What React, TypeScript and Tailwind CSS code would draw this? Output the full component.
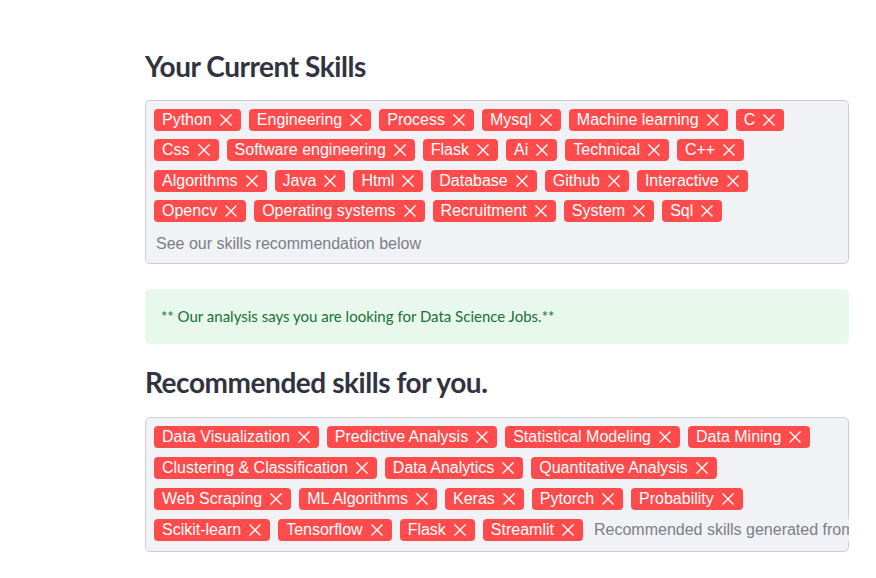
import React from "react";

const XIcon = () => (
  <svg width="12" height="12" viewBox="0 0 12 12" className="shrink-0">
    <path d="M1 1 L11 11 M11 1 L1 11" stroke="white" strokeWidth="1.4" strokeLinecap="square" fill="none" />
  </svg>
);

const Tag = ({ label }: { label: string }) => (
  <span className="flex h-[22px] items-center gap-2 rounded-[4px] bg-[#ff4b4b] pl-2 pr-[9px] text-[16px] leading-none text-white whitespace-nowrap">
    <span>{label}</span>
    <XIcon />
  </span>
);

const font = { fontFamily: "Lato, 'Source Sans Pro', 'Noto Sans', sans-serif" };

const current: string[][] = [
  ["Python", "Engineering", "Process", "Mysql", "Machine learning", "C"],
  ["Css", "Software engineering", "Flask", "Ai", "Technical", "C++"],
  ["Algorithms", "Java", "Html", "Database", "Github", "Interactive"],
  ["Opencv", "Operating systems", "Recruitment", "System", "Sql"],
];

const recommended: string[][] = [
  ["Data Visualization", "Predictive Analysis", "Statistical Modeling", "Data Mining"],
  ["Clustering & Classification", "Data Analytics", "Quantitative Analysis"],
  ["Web Scraping", "ML Algorithms", "Keras", "Pytorch", "Probability"],
];

export default function App() {
  return (
    <div className="min-h-screen w-full overflow-hidden bg-white" style={{ fontFamily: "'Liberation Sans', Arial, sans-serif" }}>
      <div className="ml-[145px] w-[704px] pt-[49px]">
        <h3 className="h-[34px] text-[28px] font-bold leading-[34px] tracking-[-0.45px] text-[#31333f]" style={font}>
          Your Current Skills
        </h3>
        <div className="mt-[17px] flex flex-col gap-y-[8.4px] rounded-[5px] border border-[#cdcdd2] bg-[#f0f2f6] pl-2 pr-2 pt-[8px] pb-[8px]">
          {current.map((row, i) => (
            <div key={i} className="flex gap-2">
              {row.map((t) => (
                <Tag key={t} label={t} />
              ))}
            </div>
          ))}
          <div className="mt-[2px] flex h-[22px] items-center pl-[2px] text-[16px] text-[#7c7e86]">
            See our skills recommendation below
          </div>
        </div>

        <div className="mt-[25px] flex h-[55px] items-center rounded-[5px] bg-[#e8f8ed] px-4 pt-[1px] text-[15px] text-[#177233]" style={font}>
          ** Our analysis says you are looking for Data Science Jobs.**
        </div>

        <h3 className="mt-[21px] h-[34px] text-[28px] font-bold leading-[34px] tracking-[-0.45px] text-[#31333f]" style={font}>
          Recommended skills for you.
        </h3>
        <div className="mt-[18px] flex flex-col gap-y-[9px] rounded-[5px] border border-[#cdcdd2] bg-[#f0f2f6] pl-2 pr-0 pt-[8px] pb-[10px]">
          {recommended.map((row, i) => (
            <div key={i} className="flex gap-2">
              {row.map((t) => (
                <Tag key={t} label={t} />
              ))}
            </div>
          ))}
          <div className="flex gap-2">
            {["Scikit-learn", "Tensorflow", "Flask", "Streamlit"].map((t) => (
              <Tag key={t} label={t} />
            ))}
            <div className="-mr-px flex h-[22px] min-w-0 flex-1 items-center overflow-hidden whitespace-nowrap bg-[#f0f2f6] pl-[3px] text-[16px] text-[#7c7e86]">
              Recommended skills generated from System
            </div>
          </div>
        </div>
      </div>
    </div>
  );
}
